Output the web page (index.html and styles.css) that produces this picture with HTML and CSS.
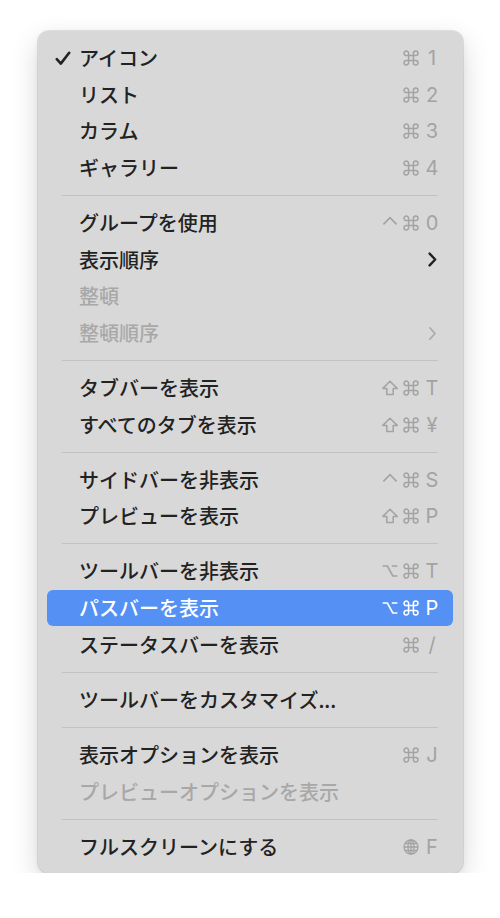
FILE: index.html
```html
<!DOCTYPE html>
<html lang="ja">
<head>
<meta charset="utf-8">
<link rel="stylesheet" href="styles.css">
</head>
<body>
<svg class="defs" width="0" height="0">
  <defs>
    <symbol id="cmd" viewBox="0 0 16 16"><path d="M5.6 5.6 V3.3 A2.3 2.3 0 1 0 3.3 5.6 H12.7 A2.3 2.3 0 1 0 10.4 3.3 V12.7 A2.3 2.3 0 1 0 12.7 10.4 H3.3 A2.3 2.3 0 1 0 5.6 12.7 Z" fill="none" stroke="currentColor" stroke-width="1.5"/></symbol>
    <symbol id="ctrl" viewBox="0 0 16 16"><path d="M1.4 9.4 L8 2.6 L14.6 9.4" fill="none" stroke="currentColor" stroke-width="1.6" stroke-linejoin="miter"/></symbol>
    <symbol id="shift" viewBox="0 0 16 16"><path d="M8 1.2 L15.2 8.4 H11.2 V14.6 H4.8 V8.4 H0.8 Z" fill="none" stroke="currentColor" stroke-width="1.5" stroke-linejoin="round"/></symbol>
    <symbol id="opt" viewBox="0 0 16 16"><path d="M0.6 3 H5.4 L10.8 13 H15.4 M9.8 3 H15.4" fill="none" stroke="currentColor" stroke-width="1.7"/></symbol>
  </defs>
</svg>
<div class="menu">
  <div class="item"><span class="check"><svg width="16" height="15" viewBox="0 0 16 15"><path d="M1.8 8.2 L5.8 12.6 L14.2 1.8" fill="none" stroke="#222" stroke-width="2.6" stroke-linecap="round" stroke-linejoin="round"/></svg></span><span class="label">アイコン</span><span class="sc"><span class="mods"><svg class="m"><use href="#cmd"/></svg></span><span class="key">1</span></span></div>
  <div class="item"><span class="check"></span><span class="label">リスト</span><span class="sc"><span class="mods"><svg class="m"><use href="#cmd"/></svg></span><span class="key">2</span></span></div>
  <div class="item"><span class="check"></span><span class="label">カラム</span><span class="sc"><span class="mods"><svg class="m"><use href="#cmd"/></svg></span><span class="key">3</span></span></div>
  <div class="item"><span class="check"></span><span class="label">ギャラリー</span><span class="sc"><span class="mods"><svg class="m"><use href="#cmd"/></svg></span><span class="key">4</span></span></div>
  <div class="sep"></div>
  <div class="item"><span class="check"></span><span class="label">グループを使用</span><span class="sc"><span class="mods"><svg class="m"><use href="#ctrl"/></svg><svg class="m"><use href="#cmd"/></svg></span><span class="key">0</span></span></div>
  <div class="item"><span class="check"></span><span class="label">表示順序</span><span class="sc"><span class="key"><svg class="chev" width="9" height="15" viewBox="0 0 9 15"><path d="M1.6 1.6 L7.2 7.5 L1.6 13.4" fill="none" stroke="#222" stroke-width="2.4" stroke-linecap="round" stroke-linejoin="round"/></svg></span></span></div>
  <div class="item disabled"><span class="check"></span><span class="label">整頓</span></div>
  <div class="item disabled"><span class="check"></span><span class="label">整頓順序</span><span class="sc"><span class="key"><svg class="chev" width="9" height="15" viewBox="0 0 9 15"><path d="M1.8 1.8 L7 7.5 L1.8 13.2" fill="none" stroke="#a8a8a8" stroke-width="1.6" stroke-linecap="round" stroke-linejoin="round"/></svg></span></span></div>
  <div class="sep"></div>
  <div class="item"><span class="check"></span><span class="label">タブバーを表示</span><span class="sc"><span class="mods"><svg class="m"><use href="#shift"/></svg><svg class="m"><use href="#cmd"/></svg></span><span class="key">T</span></span></div>
  <div class="item"><span class="check"></span><span class="label">すべてのタブを表示</span><span class="sc"><span class="mods"><svg class="m"><use href="#shift"/></svg><svg class="m"><use href="#cmd"/></svg></span><span class="key">¥</span></span></div>
  <div class="sep"></div>
  <div class="item"><span class="check"></span><span class="label">サイドバーを非表示</span><span class="sc"><span class="mods"><svg class="m"><use href="#ctrl"/></svg><svg class="m"><use href="#cmd"/></svg></span><span class="key">S</span></span></div>
  <div class="item"><span class="check"></span><span class="label">プレビューを表示</span><span class="sc"><span class="mods"><svg class="m"><use href="#shift"/></svg><svg class="m"><use href="#cmd"/></svg></span><span class="key">P</span></span></div>
  <div class="sep"></div>
  <div class="item"><span class="check"></span><span class="label">ツールバーを非表示</span><span class="sc"><span class="mods"><svg class="m"><use href="#opt"/></svg><svg class="m"><use href="#cmd"/></svg></span><span class="key">T</span></span></div>
  <div class="item active"><span class="check"></span><span class="label">パスバーを表示</span><span class="sc"><span class="mods"><svg class="m"><use href="#opt"/></svg><svg class="m"><use href="#cmd"/></svg></span><span class="key">P</span></span></div>
  <div class="item"><span class="check"></span><span class="label">ステータスバーを表示</span><span class="sc"><span class="mods"><svg class="m"><use href="#cmd"/></svg></span><span class="key">/</span></span></div>
  <div class="sep"></div>
  <div class="item"><span class="check"></span><span class="label">ツールバーをカスタマイズ...</span></div>
  <div class="sep"></div>
  <div class="item"><span class="check"></span><span class="label">表示オプションを表示</span><span class="sc"><span class="mods"><svg class="m"><use href="#cmd"/></svg></span><span class="key">J</span></span></div>
  <div class="item disabled"><span class="check"></span><span class="label">プレビューオプションを表示</span></div>
  <div class="sep"></div>
  <div class="item"><span class="check"></span><span class="label">フルスクリーンにする</span><span class="sc"><span class="mods"><svg class="m" viewBox="0 0 16 16"><g fill="none" stroke="currentColor" stroke-width="1.3"><circle cx="8" cy="8" r="7"/><ellipse cx="8" cy="8" rx="3" ry="7"/><path d="M8 1 V15 M1 8 H15 M2 4.5 H14 M2 11.5 H14"/></g></svg></span><span class="key">F</span></span></div>
</div>
</body>
</html>
```

FILE: styles.css
```css
* {
  box-sizing: border-box;
}

html, body {
  margin: 0;
  padding: 0;
  background: #ffffff;
}

body {
  font-family: "Noto Sans CJK JP", "Noto Sans", sans-serif;
}

.defs {
  position: absolute;
  width: 0;
  height: 0;
  overflow: hidden;
}

.menu {
  margin: 31px 0 0 38px;
  width: 425px;
  padding: 8.7px 10px 7.7px 9px;
  background: #d8d8d8;
  border-radius: 11px;
  box-shadow: 0 0 0 1px rgba(0, 0, 0, 0.09), 0 10px 28px rgba(0, 0, 0, 0.16), 0 2px 6px rgba(0, 0, 0, 0.06);
}

.item {
  display: flex;
  align-items: center;
  height: 36.67px;
  padding: 0 12px 0 8px;
  font-size: 20px;
  font-weight: 500;
  line-height: 1;
  color: #222222;
}

.check {
  width: 24px;
  flex: none;
  display: flex;
  align-items: center;
}

.label {
  flex: 1;
  white-space: nowrap;
}

.sc {
  display: flex;
  align-items: center;
  color: #a3a3a3;
}

.mods {
  display: flex;
  align-items: center;
  gap: 5px;
}

.m {
  display: block;
  width: 16px;
  height: 16px;
}

.key {
  width: 18px;
  margin-left: 4px;
  text-align: center;
  font-family: Inter, "Liberation Sans", sans-serif;
  font-size: 20px;
  font-weight: 400;
  display: flex;
  justify-content: center;
  align-items: center;
}

.chev {
  display: block;
}

.disabled {
  color: #a8a8a8;
}

.active {
  background: #5591f5;
  border-radius: 6px;
  color: #ffffff;
}

.active .sc {
  color: #ffffff;
}

.sep {
  height: 18.4px;
  display: flex;
  align-items: center;
  padding: 0 15px;
}

.sep::after {
  content: "";
  flex: 1;
  height: 1px;
  background: #c2c2c2;
}
```
